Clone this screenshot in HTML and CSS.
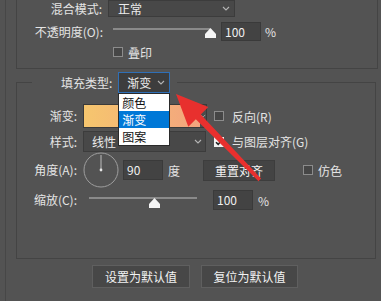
FILE: index.html
```html
<!DOCTYPE html>
<html lang="zh-CN">
<head>
<meta charset="utf-8">
<title>填充</title>
<link rel="stylesheet" href="styles.css">
</head>
<body>
<div class="dialog">
  <div class="panel">
    <section class="group-top">
      <div class="row row-blend">
        <span class="lbl lbl-blend">混合模式:</span>
        <div class="select select-blend">
          <span>正常</span>
          <svg class="chev" viewBox="0 0 8 5" width="8" height="5"><path d="M1 1 L4 4 L7 1"/></svg>
        </div>
      </div>
      <div class="row row-opacity">
        <span class="lbl lbl-opacity">不透明度(O):</span>
        <div class="slider slider-opacity">
          <div class="track track-opacity"></div>
          <svg class="thumb thumb-opacity" viewBox="0 0 11 10" width="11" height="10"><path d="M5.5 0 L11 6 L11 10 L0 10 L0 6 Z"/></svg>
        </div>
        <div class="num num-opacity">100</div>
        <span class="unit">%</span>
      </div>
      <div class="row row-overprint">
        <span class="cbox cbox-overprint"></span>
        <span class="ctext">叠印</span>
      </div>
    </section>

    <fieldset class="group-fill">
      <legend class="legend">
        <span class="lbl-legend">填充类型:</span>
        <div class="select select-type">
          <span>渐变</span>
          <svg class="chev" viewBox="0 0 8 5" width="8" height="5"><path d="M1 1 L4 4 L7 1"/></svg>
          <ul class="menu">
            <li>颜色</li>
            <li class="active">渐变</li>
            <li>图案</li>
          </ul>
        </div>
      </legend>

      <div class="row row-grad">
        <span class="lbl lbl-fill">渐变:</span>
        <div class="swatch">
          <div class="swatch-color"></div>
          <div class="swatch-btn"><svg class="chev" viewBox="0 0 8 5" width="6" height="4"><path d="M1 1 L4 4 L7 1"/></svg></div>
        </div>
        <span class="cbox cbox-reverse"></span>
        <span class="ctext">反向(R)</span>
      </div>

      <div class="row row-style">
        <span class="lbl lbl-fill">样式:</span>
        <div class="select select-style">
          <span>线性</span>
          <svg class="chev" viewBox="0 0 8 5" width="8" height="5"><path d="M1 1 L4 4 L7 1"/></svg>
        </div>
        <span class="cbox cbox-checked cbox-align">
          <svg viewBox="0 0 10 10" width="10" height="10"><path d="M2 5.2 L4.2 7.4 L8.2 2.6"/></svg>
        </span>
        <span class="ctext">与图层对齐(G)</span>
      </div>

      <div class="row row-angle">
        <span class="lbl lbl-fill">角度(A):</span>
        <svg class="dial" viewBox="0 0 36 36" width="36" height="36">
          <circle cx="18" cy="18" r="17" class="dial-ring"/>
          <line x1="18" y1="18" x2="18" y2="3" class="dial-hand"/>
          <circle cx="18" cy="18" r="1.4" class="dial-dot"/>
        </svg>
        <div class="num num-angle">90</div>
        <span class="unit unit-deg">度</span>
        <div class="btn btn-reset">重置对齐</div>
        <span class="cbox cbox-dither"></span>
        <span class="ctext">仿色</span>
      </div>

      <div class="row row-scale">
        <span class="lbl lbl-fill">缩放(C):</span>
        <div class="slider slider-scale">
          <div class="track track-scale"></div>
          <svg class="thumb thumb-scale" viewBox="0 0 11 10" width="11" height="10"><path d="M5.5 0 L11 6 L11 10 L0 10 L0 6 Z"/></svg>
        </div>
        <div class="num num-scale">100</div>
        <span class="unit unit-pct">%</span>
      </div>
    </fieldset>

    <div class="buttons">
      <div class="btn btn-default">设置为默认值</div>
      <div class="btn btn-default">复位为默认值</div>
    </div>
  </div>

  <svg class="arrow" viewBox="0 0 381 301" width="381" height="301">
    <polygon points="176,94 208.3,107.1 200.8,114.5 261.1,178.6 258.5,181.2 195.8,119.3 188.3,126.7"/>
  </svg>
</div>
</body>
</html>
```

FILE: styles.css
```css
* { box-sizing: border-box; }
html, body { margin: 0; padding: 0; }
body {
  background: #535353;
  font-family: "Noto Sans CJK SC", "Microsoft YaHei", sans-serif;
  font-size: 12px;
  color: #e4e4e4;
}
.dialog {
  position: relative;
  width: 381px;
  height: 301px;
  overflow: hidden;
  padding-left: 5px;
}
.panel {
  height: 301px;
  border-left: 1px solid #474747;
  padding-left: 10px;
}

.row { display: flex; align-items: center; }
.lbl { text-align: right; white-space: nowrap; line-height: 16px; }

/* top group */
.group-top {
  height: 69px;
  margin-right: 3px;
  border: 1px solid #444444;
  border-top: none;
}
.row-blend { height: 17px; }
.lbl-blend { width: 85px; }
.select {
  display: flex;
  align-items: center;
  justify-content: space-between;
  background: #484848;
  border: 1px solid #3c3c3c;
  color: #ececec;
}
.select-blend { margin-left: 6px; width: 127px; height: 17px; padding: 0 4px 0 9px; }
.chev { fill: none; stroke: #b4b4b4; stroke-width: 1.1; }

.row-opacity { margin-top: 5px; height: 19px; }
.lbl-opacity { width: 86px; }
.slider { position: relative; align-self: stretch; }
.slider-opacity { margin-left: 10px; width: 103px; }
.track { height: 2px; background: #8a8a8a; }
.track-opacity { margin-top: 6px; width: 97px; }
.thumb { position: absolute; fill: #f4f4f4; }
.thumb-opacity { left: 92px; top: 6px; }
.num {
  height: 19px;
  width: 40px;
  background: #434343;
  border: 1px solid #3a3a3a;
  color: #f0f0f0;
  line-height: 17px;
  padding-left: 3px;
}
.num-opacity { margin-left: 5px; }
.unit { margin-left: 4px; }

.row-overprint { margin-top: 4px; height: 14px; }
.cbox {
  display: block;
  width: 10px;
  height: 10px;
  border: 1px solid #8c8c8c;
  background: #464646;
  flex: none;
}
.cbox-overprint { margin-left: 96px; }
.ctext { margin-left: 5px; white-space: nowrap; }

/* fill group */
.group-fill {
  margin: 3px 5px 0 0;
  padding: 0;
  height: 187px;
  min-width: 0;
  border: 1px solid #444444;
}
.legend {
  display: flex;
  align-items: center;
  margin-left: 15px;
  padding: 0 7px 0 29px;
  height: 21px;
}
.lbl-legend { white-space: nowrap; line-height: 16px; }
.select-type {
  position: relative;
  margin-left: 6px;
  width: 52px;
  height: 21px;
  padding: 0 4px 0 8px;
  background: #3d3d3d;
  border: 1px solid #2f6fb6;
}
.menu {
  position: absolute;
  left: -1px;
  top: 20px;
  z-index: 5;
  width: 52px;
  margin: 0;
  padding: 0;
  list-style: none;
  background: #ffffff;
  border: 1px solid #2a2a2a;
  color: #111111;
}
.menu li { height: 17px; line-height: 17px; padding-left: 3px; }
.menu li.active { background: #0078d7; color: #ffffff; }

.lbl-fill { width: 60px; }
.row-grad { margin-top: 11px; height: 24px; }
.swatch {
  display: flex;
  margin-left: 6px;
  width: 124px;
  height: 24px;
  border: 1px solid #3a3a3a;
}
.swatch-color { flex: 1; background: linear-gradient(to right, #f6c66e, #f3a47f); }
.swatch-btn { width: 6px; display: flex; align-items: center; justify-content: center; background: #4c4c4c; }
.cbox-reverse { margin-left: 7px; }
.row-grad .ctext, .row-style .ctext { margin-left: 8px; }

.row-style { margin-top: 3px; height: 21px; }
.select-style { margin-left: 6px; width: 123px; height: 21px; padding: 0 3px 0 8px; }
.cbox-align { margin-left: 8px; }
.cbox-checked { background: #f2f2f2; border-color: #f2f2f2; position: relative; }
.cbox-checked svg { display: block; margin: -1px; fill: none; stroke: #222222; stroke-width: 1.6; }

.row-angle { height: 36px; }
.dial { margin-left: 6px; flex: none; }
.dial-ring { fill: none; stroke: #9e9e9e; stroke-width: 1; }
.dial-hand { stroke: #bdbdbd; stroke-width: 1; }
.dial-dot { fill: #e6e6e6; }
.num-angle { margin-left: 4px; height: 20px; line-height: 18px; }
.unit-deg { margin-left: 5px; }
.btn {
  display: flex;
  align-items: center;
  justify-content: center;
  background: #444444;
  border: 1px solid #3d3d3d;
  color: #f2f2f2;
  white-space: nowrap;
}
.btn-reset { margin-left: 23px; width: 72px; height: 21px; }
.cbox-dither { margin-left: 28px; }

.row-scale { margin-top: 2px; height: 20px; }
.slider-scale { margin-left: 12px; width: 113px; }
.track-scale { margin-top: 7px; width: 108px; }
.thumb-scale { left: 60px; top: 8px; }
.num-scale { margin-left: 11px; height: 20px; line-height: 18px; }
.unit-pct { margin-left: 5px; }

.buttons { display: flex; gap: 11px; margin: 6px 0 0 76px; }
.btn-default {
  height: 23px;
  width: 98px;
  background: #474747;
  border: 1px solid #5f5f5f;
}
.btn-default + .btn-default { width: 97px; }

.arrow { position: absolute; left: 0; top: 0; pointer-events: none; z-index: 10; }
.arrow polygon { fill: #e8302e; }
```
